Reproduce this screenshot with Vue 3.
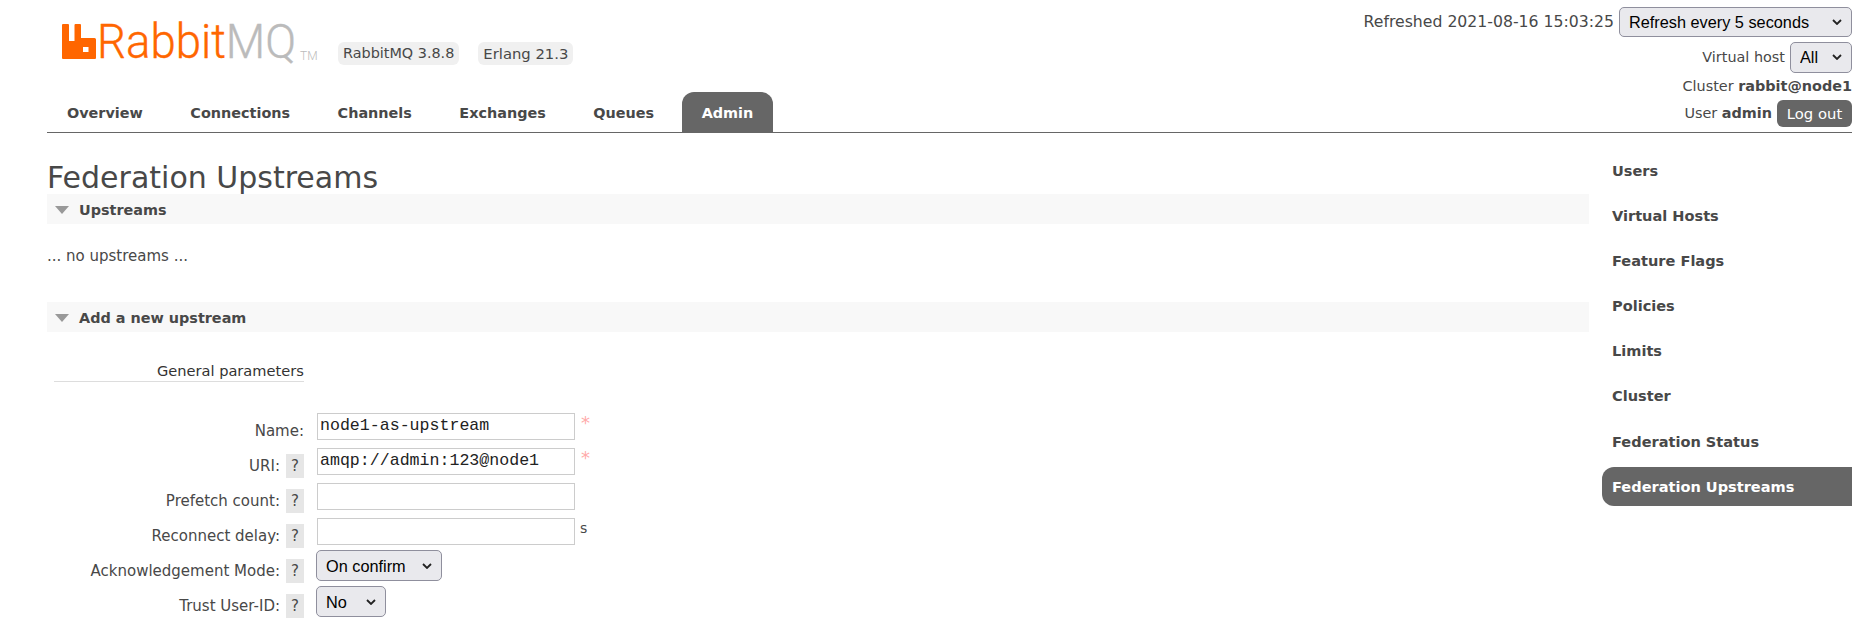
<template>
  <div class="page">
    <header class="header">
      <div class="header-left">
        <div class="brand">
          <div class="logo">
            <svg class="logo-icon" viewBox="0 0 34 35" width="34" height="35">
              <path fill-rule="evenodd" fill="#f60" d="M1 0h5a1 1 0 0 1 1 1v16h5.500V1a1 1 0 0 1 1-1h4.500a1 1 0 0 1 1 1v13h13.500a1.500 1.500 0 0 1 1.500 1.500V34a1 1 0 0 1-1 1H1a1 1 0 0 1-1-1V1a1 1 0 0 1 1-1zM21 23v5h5.500v-5z" />
            </svg>
            <span class="logo-word"><span class="logo-rabbit">Rabbit</span><span class="logo-mq">MQ</span></span>
            <span class="logo-tm">TM</span>
          </div>
          <span class="version">RabbitMQ 3.8.8</span>
          <span class="version erlang">Erlang 21.3</span>
        </div>
        <nav class="tabs">
          <a v-for="tab in tabs" :key="tab" class="tab" :class="{ active: tab === 'Admin' }">{{ tab }}</a>
        </nav>
      </div>
      <div class="status">
        <div class="status-row refresh">
          <span class="refreshed">Refreshed 2021-08-16 15:03:25</span>
          <select class="refresh-select"><option>Refresh every 5 seconds</option></select>
        </div>
        <div class="status-row vhost">
          <span>Virtual host</span>
          <select class="vhost-select"><option>All</option></select>
        </div>
        <div class="status-row cluster">Cluster&nbsp;<b>rabbit@node1</b></div>
        <div class="status-row user">
          <span>User <b>admin</b></span>
          <button class="logout">Log out</button>
        </div>
      </div>
    </header>

    <div class="main">
      <main class="content">
        <h1>Federation Upstreams</h1>
        <div class="section-head"><i class="triangle"></i>Upstreams</div>
        <p class="empty">... no upstreams ...</p>
        <div class="section-head"><i class="triangle"></i>Add a new upstream</div>
        <div class="group-title">General parameters</div>
        <form class="form">
          <div v-for="row in rows" :key="row.label" class="row">
            <label class="label">
              <span>{{ row.label }}:</span>
              <span v-if="row.help" class="help">?</span>
            </label>
            <select v-if="row.options" class="field-select" :class="row.cls">
              <option v-for="o in row.options" :key="o">{{ o }}</option>
            </select>
            <input v-else class="field" type="text" :value="row.value" />
            <span v-if="row.required" class="star">*</span>
            <span v-if="row.unit" class="unit">{{ row.unit }}</span>
          </div>
        </form>
      </main>
      <aside class="side">
        <a v-for="item in sideItems" :key="item" class="side-item" :class="{ active: item === 'Federation Upstreams' }">{{ item }}</a>
      </aside>
    </div>
  </div>
</template>

<script setup>
const tabs = ["Overview", "Connections", "Channels", "Exchanges", "Queues", "Admin"];

const sideItems = [
  "Users",
  "Virtual Hosts",
  "Feature Flags",
  "Policies",
  "Limits",
  "Cluster",
  "Federation Status",
  "Federation Upstreams",
];

const rows = [
  { label: "Name", value: "node1-as-upstream", required: true },
  { label: "URI", value: "amqp://admin:123@node1", help: true, required: true },
  { label: "Prefetch count", value: "", help: true },
  { label: "Reconnect delay", value: "", help: true, unit: "s" },
  { label: "Acknowledgement Mode", help: true, options: ["On confirm"], cls: "ack" },
  { label: "Trust User-ID", help: true, options: ["No"], cls: "trust" },
];
</script>

<style>
html,
body {
  margin: 0;
  overflow: hidden;
  background: #fff;
}
</style>

<style scoped>
.page {
  padding: 0 23px 0 47px;
  font-family: "DejaVu Sans", Verdana, sans-serif;
  font-size: 14.4px;
  color: #484848;
}

.header {
  display: flex;
  justify-content: space-between;
  height: 132px;
  border-bottom: 1px solid #666;
}

.header-left {
  display: flex;
  flex-direction: column;
  justify-content: space-between;
}

.brand {
  display: flex;
  align-items: flex-start;
  padding: 22px 0 0 15px;
}

.logo {
  display: flex;
  align-items: flex-start;
  width: 276px;
  font-family: Roboto, sans-serif;
  font-weight: 300;
  font-size: 49px;
  line-height: 40px;
}

.logo-icon {
  flex: none;
  margin: 2px 1px 0 0;
}

.logo-word {
  flex: none;
  width: 198px;
  white-space: nowrap;
  -webkit-text-stroke: 0.4px;
  transform: scaleX(0.93);
  transform-origin: left;
}

.logo-rabbit {
  color: #f60;
}

.logo-mq {
  color: #bbb;
}

.logo-tm {
  color: #bbb;
  font-size: 12px;
  line-height: 12px;
  margin: 28px 0 0 5px;
}

.version {
  margin: 20px 19px 0 0;
  padding: 0 5px;
  height: 23px;
  line-height: 23px;
  background: #f0f0f0;
  border-radius: 6px;
  font-size: 14.4px;
}

.version.erlang {
  font-size: 14.8px;
}

.tabs {
  display: flex;
  gap: 7.5px;
}

.tab {
  padding: 0 20px;
  height: 40px;
  line-height: 42px;
  font-weight: 700;
  border-radius: 12px 12px 0 0;
}

.tab.active {
  color: #fff;
  background: #666;
}

.status {
  display: flex;
  flex-direction: column;
  align-items: flex-end;
}

.status-row {
  display: flex;
  align-items: center;
  justify-content: flex-end;
  gap: 5px;
}

.refreshed {
  font-size: 15.7px;
}

.refresh {
  margin-top: 6px;
  height: 31px;
}

.vhost {
  margin-top: 4px;
  height: 32px;
}

.cluster {
  gap: 0;
  height: 26px;
}

.user {
  height: 28px;
}

select {
  appearance: none;
  padding: 0 0 0 9px;
  font-family: "Liberation Sans", Arial, sans-serif;
  font-size: 16.3px;
  color: #000;
  background-color: #e9e9ed;
  background-image: url("data:image/svg+xml,%3Csvg xmlns='http://www.w3.org/2000/svg' width='10' height='6' viewBox='0 0 10 6'%3E%3Cpath d='M1 1l4 4 4-4' fill='none' stroke='%23222' stroke-width='1.800'/%3E%3C/svg%3E");
  background-repeat: no-repeat;
  background-position: right 9px center;
  border: 1px solid #8f8f9d;
  border-radius: 5px;
}

.refresh-select {
  width: 233px;
  height: 30px;
}

.vhost-select {
  width: 62px;
  height: 31px;
}

.logout {
  width: 75px;
  height: 27px;
  padding: 0;
  border: 0;
  border-radius: 6px;
  background: #666;
  color: #fff;
  font-family: inherit;
  font-size: 14.8px;
}

.main {
  display: flex;
  justify-content: space-between;
}

.content {
  width: 1542px;
}

h1 {
  margin: 0;
  padding-top: 26px;
  height: 35px;
  line-height: 37px;
  font-size: 30px;
  font-weight: 400;
  color: #484848;
}

.section-head {
  box-sizing: border-box;
  display: flex;
  align-items: center;
  height: 30px;
  background: #f8f8f8;
  padding: 1px 0 0 8px;
  font-weight: 700;
}

.triangle {
  width: 0;
  height: 0;
  margin: 0 10px 0 0;
  border-left: 7px solid transparent;
  border-right: 7px solid transparent;
  border-top: 8px solid #999;
}

.empty {
  margin: 0;
  height: 78px;
  line-height: 64px;
  font-size: 15px;
}

.group-title {
  width: 147px;
  margin: 24px 0 0 7px;
  padding-left: 103px;
  height: 25px;
  line-height: 29px;
  border-bottom: 1px solid #ddd;
  color: #333;
  font-size: 14.6px;
  white-space: nowrap;
}

.form {
  margin-top: 27px;
}

.row {
  display: flex;
  align-items: flex-start;
  height: 35px;
}

.label {
  display: flex;
  justify-content: flex-end;
  align-items: center;
  gap: 6px;
  width: 257px;
  margin-top: 10px;
  height: 24px;
  flex: none;
  font-size: 15px;
  white-space: nowrap;
}

.help {
  width: 18px;
  height: 24px;
  line-height: 24px;
  text-align: center;
  background: #e6e6e6;
  font-size: 15px;
}

.field {
  box-sizing: border-box;
  width: 258px;
  height: 27px;
  margin: 4px 0 0 13px;
  padding: 0 2px 3px;
  border: 1px solid #ccc;
  font-family: "Liberation Mono", "Courier New", monospace;
  font-size: 16.6px;
  color: #222;
  outline: none;
}

.field-select {
  margin-left: 12px;
  height: 31px;
}

.ack {
  width: 126px;
  margin-top: 1px;
}

.trust {
  width: 70px;
  margin-top: 2px;
}

.star {
  margin: 3px 0 0 6px;
  color: #faa;
  font-size: 18px;
}

.unit {
  margin: 6px 0 0 5px;
  font-size: 14px;
}

.side {
  width: 250px;
  padding-top: 17.5px;
}

.side-item {
  display: block;
  height: 39px;
  line-height: 39px;
  margin-bottom: 6.2px;
  padding-left: 10px;
  font-size: 14.55px;
  font-weight: 700;
  border-radius: 12px 0 0 12px;
}

.side-item.active {
  background: #666;
  color: #fff;
}
</style>
